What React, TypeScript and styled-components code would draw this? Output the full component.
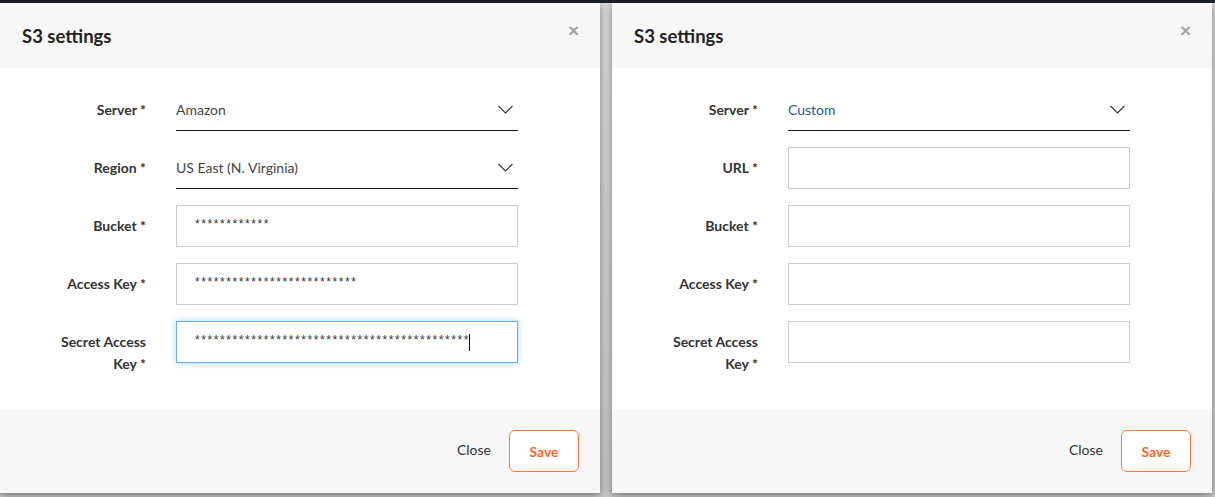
import React from 'react';
import styled, { createGlobalStyle } from 'styled-components';

const GlobalStyle = createGlobalStyle`
  html, body {
    margin: 0;
    padding: 0;
    background: #d2d2d2;
    font-family: Lato, "Open Sans", sans-serif;
  }
  * { box-sizing: border-box; }
`;

type FieldDef = {
  label: string;
  kind: 'select' | 'input';
  value?: string;
  accent?: boolean;
  focused?: boolean;
};

const Page = styled.div`
  width: 1215px;
  height: 497px;
  overflow: hidden;
  display: flex;
  flex-direction: column;
  background: linear-gradient(#dcdcdc, #c9c9c9);
`;

const TopBar = styled.div`
  height: 3px;
  background: #1e2329;
  flex: none;
`;

const Stage = styled.div`
  display: flex;
  gap: 12px;
`;

const Modal = styled.div`
  width: 600px;
  height: 490px;
  flex: none;
  display: flex;
  flex-direction: column;
  background: #fff;
  box-shadow: 0 2px 8px rgba(0, 0, 0, 0.45);
`;

const Header = styled.div`
  height: 65px;
  flex: none;
  display: flex;
  align-items: center;
  justify-content: space-between;
  padding: 0 21px 0 22px;
  background: #f7f7f7;
`;

const Title = styled.h4`
  margin: 0;
  font-size: 18.5px;
  font-weight: 700;
  color: #222;
`;

const CloseX = styled.span`
  font-family: "Liberation Sans", Arial, sans-serif;
  font-size: 19px;
  font-weight: 700;
  color: #a3a3a3;
  margin-top: -10px;
  line-height: 1;
`;

const Body = styled.div`
  flex: 1;
  padding: 21px 0 0 46px;
`;

const Form = styled.div`
  display: grid;
  grid-template-columns: 100px 342px;
  column-gap: 30px;
  row-gap: 16px;
`;

const Label = styled.label`
  font-size: 14px;
  font-weight: 700;
  color: #333;
  text-align: right;
  line-height: 22px;
  padding-top: 10px;
`;

const Select = styled.div<{ $accent?: boolean }>`
  height: 42px;
  display: flex;
  align-items: center;
  justify-content: space-between;
  padding: 0 5px 0 0;
  border-bottom: 1px solid #151515;
  font-size: 14px;
  color: ${(p) => (p.$accent ? '#1f5d8f' : '#444')};
`;

const Input = styled.div<{ $focused?: boolean }>`
  height: 42px;
  display: flex;
  align-items: center;
  padding: 0 0 4px 18px;
  border: 1px solid ${(p) => (p.$focused ? '#6aaee6' : '#cccccc')};
  box-shadow: ${(p) => (p.$focused ? '0 0 6px rgba(102, 175, 233, 0.55)' : 'none')};
  font-family: "Liberation Sans", Arial, sans-serif;
  font-size: 12px;
  letter-spacing: 1.58px;
  color: #333;
`;

const Caret = styled.span`
  display: inline-block;
  width: 1px;
  height: 17px;
  background: #111;
  margin: 4px 0 0 -1px;
`;

const Footer = styled.div`
  height: 84px;
  flex: none;
  display: flex;
  align-items: center;
  justify-content: flex-end;
  gap: 18px;
  padding: 0 21px 0 0;
  background: #f7f7f7;
`;

const TextButton = styled.button`
  border: none;
  background: none;
  padding: 0 0 3px;
  font-family: Lato, "Open Sans", sans-serif;
  font-size: 14px;
  color: #333;
`;

const SaveButton = styled.button`
  width: 70px;
  height: 42px;
  border: 1px solid #ff7a3a;
  border-radius: 6px;
  background: #fff;
  font-family: Lato, "Open Sans", sans-serif;
  font-size: 14px;
  font-weight: 700;
  color: #f26a2b;
`;

const Chevron = () => (
  <svg width="15" height="9" viewBox="0 0 15 9" fill="none">
    <path d="M0.5 1 L7.5 8 L14.5 1" stroke="#333" strokeWidth="1.1" />
  </svg>
);

const SettingsModal = ({ fields }: { fields: FieldDef[] }) => (
  <Modal>
    <Header>
      <Title>S3 settings</Title>
      <CloseX>×</CloseX>
    </Header>
    <Body>
      <Form>
        {fields.map((f) => (
          <React.Fragment key={f.label}>
            <Label>{f.label}</Label>
            {f.kind === 'select' ? (
              <Select $accent={f.accent}>
                <span>{f.value}</span>
                <Chevron />
              </Select>
            ) : (
              <Input $focused={f.focused}>
                {f.value}
                {f.focused && <Caret />}
              </Input>
            )}
          </React.Fragment>
        ))}
      </Form>
    </Body>
    <Footer>
      <TextButton>Close</TextButton>
      <SaveButton>Save</SaveButton>
    </Footer>
  </Modal>
);

const amazonFields: FieldDef[] = [
  { label: 'Server *', kind: 'select', value: 'Amazon' },
  { label: 'Region *', kind: 'select', value: 'US East (N. Virginia)' },
  { label: 'Bucket *', kind: 'input', value: '*'.repeat(12) },
  { label: 'Access Key *', kind: 'input', value: '*'.repeat(26) },
  { label: 'Secret Access Key *', kind: 'input', value: '*'.repeat(44), focused: true },
];

const customFields: FieldDef[] = [
  { label: 'Server *', kind: 'select', value: 'Custom', accent: true },
  { label: 'URL *', kind: 'input' },
  { label: 'Bucket *', kind: 'input' },
  { label: 'Access Key *', kind: 'input' },
  { label: 'Secret Access Key *', kind: 'input' },
];

export default function App() {
  return (
    <>
      <GlobalStyle />
      <Page>
        <TopBar />
        <Stage>
          <SettingsModal fields={amazonFields} />
          <SettingsModal fields={customFields} />
        </Stage>
      </Page>
    </>
  );
}
